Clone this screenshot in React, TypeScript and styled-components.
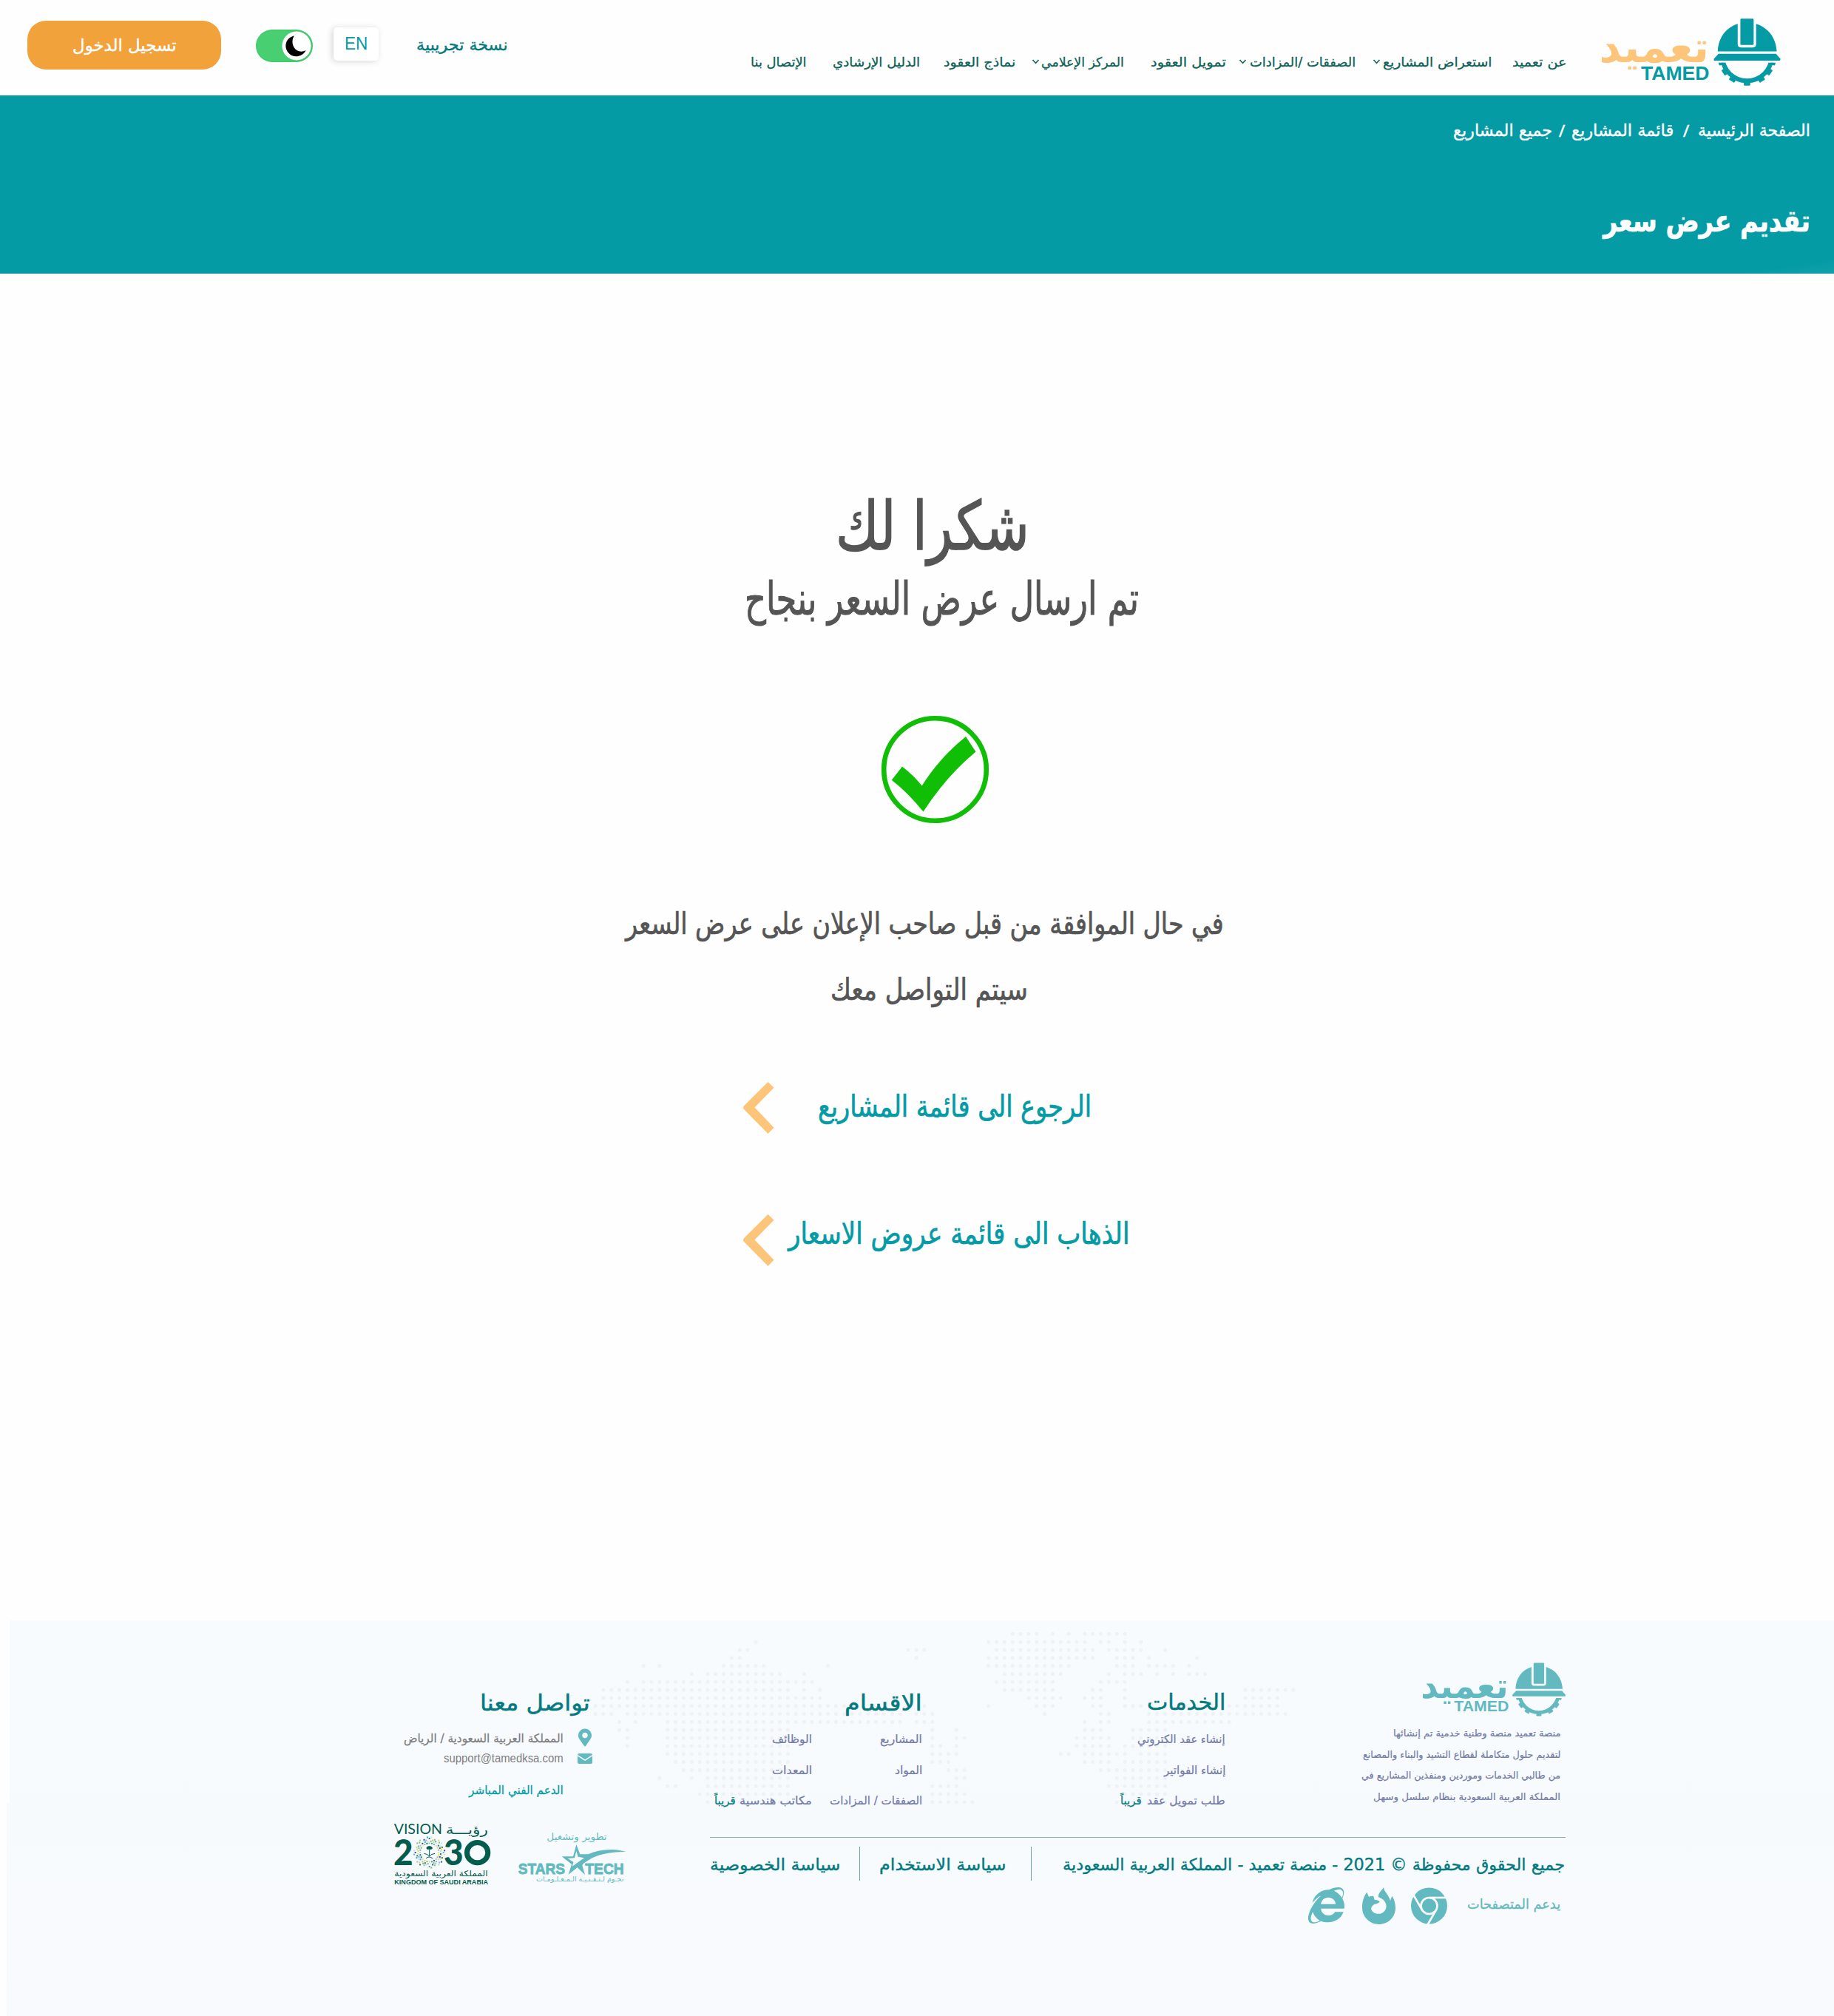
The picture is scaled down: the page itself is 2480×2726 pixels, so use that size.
import React, { useLayoutEffect, useRef, useState } from "react";
import styled, { createGlobalStyle } from "styled-components";
import { FaInternetExplorer, FaMapMarkerAlt } from "react-icons/fa";

const teal = "#049ba5";
const deep = "#047a80";
const soft = "#62bac0";
const arabic = '"DejaVu Sans Condensed", "DejaVu Sans", sans-serif';
const latin = '"Liberation Sans", Arial, sans-serif';

const GlobalStyle = createGlobalStyle`
  *, *::before, *::after { box-sizing: border-box; }
  body { margin: 0; background: #fefefe; font-family: ${arabic}; }
  h1, h2, h3, p, ul { margin: 0; padding: 0; font-weight: inherit; }
`;

/* ---------- fitted text ---------- */

type FitProps = {
  w: number;
  size: number;
  line: number;
  color?: string;
  bold?: boolean;
  western?: boolean;
  before?: number;
  above?: number;
  children: React.ReactNode;
};

const FitBox = styled.span<{
  $w: number;
  $size: number;
  $line: number;
  $color?: string;
  $bold?: boolean;
  $western?: boolean;
  $before: number;
  $above: number;
}>`
  display: block;
  flex: none;
  width: ${(p) => p.$w}px;
  height: ${(p) => p.$line}px;
  line-height: ${(p) => p.$line}px;
  font-size: ${(p) => p.$size}px;
  font-family: ${(p) => (p.$western ? latin : arabic)};
  font-weight: ${(p) => (p.$bold ? 700 : 400)};
  color: ${(p) => p.$color ?? "inherit"};
  margin-inline-start: ${(p) => p.$before}px;
  margin-top: ${(p) => p.$above}px;
  text-align: start;
  white-space: nowrap;
  -webkit-text-stroke: ${(p) => (p.$western ? "0" : "0.016em")} currentColor;
`;

const FitInner = styled.span`
  display: inline-block;
  transform-origin: right center;
`;

function Fit({ w, size, line, color, bold, western, before = 0, above = 0, children }: FitProps) {
  const ref = useRef<HTMLSpanElement>(null);
  const [scale, setScale] = useState(1);
  useLayoutEffect(() => {
    if (ref.current) setScale(w / ref.current.offsetWidth);
  }, [w, size]);
  return (
    <FitBox
      $w={w}
      $size={size}
      $line={line}
      $color={color}
      $bold={bold}
      $western={western}
      $before={before}
      $above={above}
    >
      <FitInner ref={ref} style={{ transform: `scaleX(${scale})` }}>
        {children}
      </FitInner>
    </FitBox>
  );
}

/* ---------- drawings ---------- */

const Drawing = styled.svg<{ $w: number; $h: number; $before?: number; $above?: number }>`
  display: block;
  flex: none;
  width: ${(p) => p.$w}px;
  height: ${(p) => p.$h}px;
  margin-right: ${(p) => p.$before ?? 0}px;
  margin-top: ${(p) => p.$above ?? 0}px;
  overflow: visible;
  direction: ltr;
`;

function TamedLogo({ w, h, word, mark, bg }: { w: number; h: number; word: string; mark: string; bg: string }) {
  const teeth = [12, 35, 58, 90, 122, 145, 168];
  return (
    <Drawing $w={w} $h={h} viewBox="39 44 735 274">
      <path
        fill={mark}
        d="M519 178C521 122 552 82 600 66V148Q600 162 614 162H661Q675 162 675 148V66C724 82 756 122 759 178Z"
      />
      <rect x="611" y="45" width="54" height="107" rx="4" fill={mark} />
      <path fill={mark} d="M522 188H756L773 207Q776 216 768 216H509Q500 216 504 207Z" />
      <clipPath id={`gear-${w}`}>
        <rect x="500" y="224" width="280" height="100" />
      </clipPath>
      <g clipPath={`url(#gear-${w})`}>
        <circle cx="638" cy="198" r="99" fill="none" stroke={mark} strokeWidth="20" />
        {teeth.map((a) => (
          <rect
            key={a}
            x="735"
            y="185"
            width="22"
            height="26"
            rx="3"
            fill={mark}
            transform={`rotate(${a} 638 198)`}
          />
        ))}
        <circle cx="638" cy="198" r="91" fill={bg} />
      </g>
      <text
        x="36"
        y="223"
        textLength="447"
        lengthAdjust="spacingAndGlyphs"
        fontFamily={arabic}
        fontWeight="700"
        fontSize="176"
        fill={word}
      >
        تعميد
      </text>
      <text
        x="206"
        y="294"
        textLength="279"
        lengthAdjust="spacingAndGlyphs"
        fontFamily={latin}
        fontWeight="700"
        fontSize="78"
        fill={mark}
      >
        TAMED
      </text>
    </Drawing>
  );
}

const NavChevron = ({ before }: { before: number }) => (
  <Drawing $w={9} $h={7} $before={before} $above={11} viewBox="0 0 9 7">
    <path d="M0.5 1L4.5 5.4L8.5 1" fill="none" stroke="#0f6b5c" strokeWidth="1.6" />
  </Drawing>
);

const Toggle = () => (
  <Drawing $w={77} $h={44} $before={28} $above={40} viewBox="0 0 77 44">
    <rect width="77" height="44" rx="22" fill="#3fc968" />
    <rect x="1" y="1.5" width="60" height="41" rx="20.5" fill="#47cf72" />
    <circle cx="55" cy="22" r="19.6" fill="#fff" />
    <path
      fill="#000"
      d="M52 8.3C44 10 39.5 17 40.5 24C42 33 50 37.3 57 36C62 35 66 32 67.5 28C62 31 55 30 51.5 24C48.5 18.5 49 12.5 52 8.3Z"
    />
  </Drawing>
);

const CheckMark = () => (
  <Drawing $w={145} $h={145} $before={1143} $above={119} viewBox="1192 968 145 145">
    <circle cx="1264.5" cy="1040.5" r="69.3" fill="none" stroke="#10be06" strokeWidth="6.6" />
    <path
      fill="#10be06"
      d="M1306 996L1319.5 1016.5Q1280 1049 1248.5 1097.5Q1228 1072 1205.8 1054.7L1220 1036.5Q1235 1048 1246.7 1062.5Q1270 1025 1306 996Z"
    />
  </Drawing>
);

const BackArrow = ({ before }: { before: number }) => (
  <Drawing $w={41.5} $h={70} $before={before} viewBox="0 0 41.5 70">
    <path
      fill="#fdc57a"
      d="M33.5 0L41.5 7.8L15.5 34.6L41.5 61.8L33.5 70L1 37Q-1 34.6 1 32.3Z"
    />
  </Drawing>
);

type Span = [number, number];
const mapRows: Span[][] = [
  [[52, 55], [57, 57], [59, 59], [61, 66]],
  [[20, 20], [49, 61], [63, 64], [66, 66], [68, 68]],
  [[18, 19], [39, 41], [50, 62], [64, 68], [71, 71]],
  [[17, 18], [40, 40], [49, 62], [65, 67], [69, 69], [75, 75]],
  [[6, 6], [8, 8], [16, 21], [29, 29], [49, 59], [65, 67], [69, 72], [74, 74]],
  [[12, 12], [14, 23], [26, 26], [51, 58], [64, 64], [66, 68], [70, 70], [72, 72], [74, 76]],
  [[4, 4], [6, 27], [50, 57], [63, 66]],
  [[1, 24], [26, 26], [28, 28], [51, 57], [62, 63], [66, 66], [81, 87]],
  [[1, 28], [54, 58], [61, 63], [66, 66], [81, 85]],
  [[0, 31], [41, 41], [49, 49], [55, 57], [62, 63], [66, 68], [79, 85]],
  [[0, 2], [4, 38], [40, 42], [56, 56], [63, 64], [69, 86]],
  [[3, 3], [5, 5], [9, 38], [40, 42], [61, 61], [63, 64], [69, 79]],
  [[3, 4], [9, 24], [42, 42], [45, 45], [61, 63], [67, 71]],
  [[4, 4], [9, 24], [42, 42], [45, 46], [60, 64], [67, 71]],
  [[4, 4], [9, 24], [42, 43], [45, 45], [60, 64], [66, 71]],
  [[9, 24], [42, 45], [58, 59], [61, 66], [68, 71]],
  [[10, 24], [42, 44], [61, 64], [66, 71]],
  [[11, 24], [44, 46], [63, 71]],
  [[8, 8], [12, 12], [14, 24], [45, 46], [65, 71]],
  [[9, 10], [14, 24], [42, 45], [64, 71]],
  [[13, 24], [42, 46], [66, 71]],
  [[14, 24], [42, 47], [65, 71]],
];

const MapLayer = styled.svg`
  position: absolute;
  left: 789px;
  top: 12px;
  width: 960px;
  height: 242px;
  direction: ltr;
`;

const DottedMap = () => (
  <MapLayer viewBox="798 2203 960 242">
    {mapRows.map((row, r) =>
      row.map(([from, to]) =>
        Array.from({ length: to - from + 1 }, (_, i) => (
          <circle
            key={`${r}-${from + i}`}
            cx={805 + (from + i) * 10.85}
            cy={2209.3 + r * 10.83}
            r="2.5"
            fill="#eef1f5"
          />
        ))
      )
    )}
  </MapLayer>
);

const Envelope = () => (
  <Drawing $w={20} $h={14} $before={47} $above={5} viewBox="0 0 20 14">
    <rect width="20" height="14" rx="2" fill={soft} />
    <path d="M0 2.6L10 9.2L20 2.6" fill="none" stroke="#f8fbfe" strokeWidth="1.5" />
  </Drawing>
);

const emblemColors = ["#7ab929", "#1d9ad6", "#0b6e4f", "#d8df25", "#57b7a5", "#1f3f8f", "#9aa5ad"];

const VisionLogo = () => (
  <Drawing $w={133.3} $h={89.3} $before={34.7} $above={27} viewBox="96 636 400 268">
    <g fill="#045c4d" fontFamily={latin}>
      <text x="98" y="694" fontSize="58" textLength="196" lengthAdjust="spacingAndGlyphs" fontFamily="Lato">
        VISION
      </text>
      <text x="308" y="692" fontSize="52" textLength="172" lengthAdjust="spacingAndGlyphs" fontFamily={arabic}>
        رؤيـــة
      </text>
      <text x="96" y="820" fontSize="143" fontWeight="900" textLength="80" lengthAdjust="spacingAndGlyphs" fontFamily="Lato">
        2
      </text>
      <text x="300" y="820" fontSize="143" fontWeight="900" textLength="80" lengthAdjust="spacingAndGlyphs" fontFamily="Lato">
        3
      </text>
      <ellipse cx="437" cy="768.5" rx="42.5" ry="41" fill="none" stroke="#045c4d" strokeWidth="21" />
      <text x="100" y="865" fontSize="32" textLength="379" lengthAdjust="spacingAndGlyphs" fontFamily={arabic}>
        المملكة العربية السعودية
      </text>
      <text x="100" y="898" fontSize="25" fontWeight="700" textLength="380" lengthAdjust="spacingAndGlyphs">
        KINGDOM OF SAUDI ARABIA
      </text>
    </g>
    {[38, 46, 53, 60].map((radius, ring) =>
      Array.from({ length: 24 }, (_, i) => {
        const a = ((i + (ring % 2) / 2) * Math.PI) / 12;
        const wave = ring > 1 ? Math.cos(a * 8) * 4 : 0;
        return (
          <rect
            key={`${ring}-${i}`}
            x={242 + Math.cos(a) * (radius + wave) - 3}
            y={768 + Math.sin(a) * (radius + wave) - 3}
            width={6}
            height={6}
            fill={emblemColors[(i * 3 + ring * 2) % emblemColors.length]}
            opacity={(i + ring) % 3 === 0 ? 0.35 : 0.9}
          />
        );
      })
    )}
    <g fill="none" stroke="#045c4d" strokeWidth="3">
      <path d="M242 752V784M220 772Q234 774 242 782Q250 774 264 772M228 792Q238 780 256 792" />
      <path fill="#045c4d" d="M231 752Q230 743 242 743Q254 743 253 752Q248 757 242 752Q236 757 231 752Z" />
    </g>
  </Drawing>
);

const StarsTech = () => (
  <Drawing $w={148} $h={72} $above={41} viewBox="600 678 444 216">
    <g fill={soft}>
      <text x="718" y="718" fontSize="38" textLength="244" lengthAdjust="spacingAndGlyphs" fontFamily={arabic}>
        تطوير وتشغيل
      </text>
      <g stroke={soft} strokeWidth="2.5" fontFamily={latin} fontWeight="700" fontSize="61">
        <text x="602" y="856" textLength="190" lengthAdjust="spacingAndGlyphs">
          STARS
        </text>
        <text x="874" y="856" textLength="157" lengthAdjust="spacingAndGlyphs">
          TECH
        </text>
      </g>
      <path
        d="M838 735L853 775H886Q930 755 985 756Q1015 757 1040 765Q940 764 885 800Q845 824 806 857L819 815L779 784H825ZM838 762L831 790L803 792L826 806L822 824Q848 805 870 790L845 785Z"
        fillRule="evenodd"
      />
      <path d="M880 790Q950 752 1010 758Q930 762 880 796L838 824L873 858L862 820Z" />
      <text x="675" y="885" fontSize="28" textLength="355" lengthAdjust="spacingAndGlyphs" fontFamily={arabic}>
        نجـوم لـتـقـنـيـة الـمـعـلـومـات
      </text>
    </g>
  </Drawing>
);

const ChromeIcon = () => (
  <Drawing $w={49} $h={50} $before={27} viewBox="504 996 147 150">
    <circle cx="577.5" cy="1071" r="73.5" fill={soft} />
    <g stroke="#f8fbfe" strokeWidth="8" fill="none">
      <circle cx="577.5" cy="1071" r="33" />
      {[0, 120, 240].map((a) => (
        <path key={a} d="M577 1038H652" transform={`rotate(${a} 577.5 1071)`} />
      ))}
    </g>
  </Drawing>
);

const FirefoxIcon = () => (
  <Drawing $w={45} $h={50} $before={21} viewBox="306 996 135 150">
    <path
      fill={soft}
      d="M325 1016L333 1035C340 1031 347 1030 352 1032L356 1047C363 1046 370 1048 377 1053C374 1062 362 1063 355 1065C346 1071 341 1077 343 1086C347 1100 370 1109 387 1100C403 1091 408 1072 400 1058C395 1047 384 1040 372 1036C370 1018 385 1010 393 996C395 1013 407 1020 413 1034C417 1040 418 1045 420 1050L427 1031C437 1046 441 1061 441 1080C441 1118 410 1146 374 1146C336 1146 306 1116 306 1078C306 1053 312 1034 325 1016Z"
    />
  </Drawing>
);

const ExplorerIcon = styled(FaInternetExplorer)`
  flex: none;
  width: 49px;
  height: 49px;
  margin-right: 24px;
  color: ${soft};
`;

const PinIcon = styled(FaMapMarkerAlt)`
  flex: none;
  width: 18px;
  height: 25px;
  margin-right: 48px;
  color: ${soft};
`;

/* ---------- layout ---------- */

const Page = styled.div`
  width: 2480px;
  height: 2726px;
  overflow: hidden;
  direction: rtl;
  background: #fefefe;
`;

const Header = styled.header`
  display: flex;
  align-items: flex-start;
  height: 129px;
  padding-right: 72px;
`;

const LogoSlot = styled.div`
  flex: none;
  padding-top: 25px;
`;

const Nav = styled.nav`
  display: flex;
  flex: none;
  padding-top: 69px;
  color: #0d6156;
`;

const LanguageBox = styled.button`
  display: flex;
  justify-content: center;
  flex: none;
  width: 61px;
  height: 45px;
  margin: 37px 51px 0 0;
  padding: 0;
  border: 0;
  border-radius: 5px;
  background: #fff;
  box-shadow: -2px 1px 8px rgba(0, 0, 0, 0.16);
`;

const LoginButton = styled.button`
  display: flex;
  align-items: center;
  justify-content: center;
  flex: none;
  width: 262px;
  height: 66px;
  margin: 28px 47px 0 0;
  padding: 0;
  border: 0;
  border-radius: 25px;
  background: #f1a23b;
`;

const Banner = styled.section`
  height: 241px;
  padding: 27px 32px 0 0;
  color: #fff;
  background: linear-gradient(172deg, transparent 88%, rgba(255, 255, 255, 0.06)) right bottom / 400px 100px no-repeat,
    ${teal};
`;

const Crumbs = styled.div`
  display: flex;
`;

const Main = styled.main`
  height: 1821px;
  padding-top: 287px;
  color: #555;
`;

const LinkRow = styled.div<{ $above: number }>`
  display: flex;
  height: 70px;
  margin-top: ${(p) => p.$above}px;
  color: ${teal};
`;

const Footer = styled.footer`
  position: relative;
  display: flex;
  width: 2471px;
  height: 535px;
  padding-right: 363px;
  background: linear-gradient(#fefefe, #fefefe) left top / 4px 247px no-repeat,
    linear-gradient(#f7fbfe, #f8fafd);
`;

const FooterMain = styled.div`
  position: relative;
  flex: none;
  width: 1157px;
`;

const FooterColumns = styled.div`
  display: flex;
  height: 294px;
  border-bottom: 1.5px solid #8fafae;
`;

const About = styled.div`
  flex: none;
  width: 276px;
  padding-top: 57px;
  color: #747ca8;
`;

const AboutText = styled.div`
  padding: 9px 7px 0 0;
`;

const Column = styled.div<{ $before: number; $top: number; $w: number }>`
  flex: none;
  width: ${(p) => p.$w}px;
  margin-inline-start: ${(p) => p.$before}px;
  padding-top: ${(p) => p.$top}px;
  color: #747ca8;
`;

const Row = styled.div<{ $above?: number }>`
  display: flex;
  margin-top: ${(p) => p.$above ?? 0}px;
`;

const Legal = styled.div`
  display: flex;
  height: 54px;
  padding: 12px 1px 0 0;
  color: ${deep};
`;

const Divider = styled.i<{ $before: number }>`
  flex: none;
  width: 1.5px;
  height: 46px;
  margin-inline-start: ${(p) => p.$before}px;
  background: #6ba5a8;
`;

const Browsers = styled.div`
  display: flex;
  margin-top: 13px;
  color: ${soft};
`;

const Contact = styled.div`
  position: relative;
  flex: none;
  width: 315px;
  margin-inline-start: 112px;
  padding-top: 90px;
  color: #7e7e80;
`;

/* ---------- content ---------- */

type NavItem = { label: string; w: number; before: number; arrow?: number };

const navItems: NavItem[] = [
  { label: "عن تعميد", w: 73, before: 45 },
  { label: "استعراض المشاريع", w: 148, before: 28, arrow: 3 },
  { label: "الصفقات /المزادات", w: 143, before: 24, arrow: 5 },
  { label: "تمويل العقود", w: 102, before: 18 },
  { label: "المركز الإعلامي", w: 112, before: 36, arrow: 3 },
  { label: "نماذج العقود", w: 97, before: 23 },
  { label: "الدليل الإرشادي", w: 118, before: 32 },
  { label: "الإتصال بنا", w: 76, before: 35 },
];

const aboutLines = [
  { text: "منصة تعميد منصة وطنية خدمية تم إنشائها", w: 227 },
  { text: "لتقديم حلول متكاملة لقطاع التشيد والبناء والمصانع", w: 267 },
  { text: "من طالبي الخدمات وموردين ومنفذين المشاريع في", w: 269 },
  { text: "المملكة العربية السعودية بنظام سلسل وسهل", w: 253 },
];

const FooterLink = ({ w, children, before }: { w: number; children: string; before?: number }) => (
  <Fit w={w} size={15.5} line={41.5} before={before}>
    {children}
  </Fit>
);

const Soon = ({ before }: { before: number }) => (
  <Fit w={29} size={15.5} line={41.5} color={deep} before={before}>
    قريباً
  </Fit>
);

export default function App() {
  return (
    <Page>
      <GlobalStyle />
      <Header>
        <LogoSlot>
          <TamedLogo w={245} h={91} word="#fdc57a" mark={teal} bg="#fefefe" />
        </LogoSlot>
        <Nav>
          {navItems.map((item) => (
            <React.Fragment key={item.label}>
              <Fit w={item.w} size={17.5} line={30} before={item.before}>
                {item.label}
              </Fit>
              {item.arrow && <NavChevron before={item.arrow} />}
            </React.Fragment>
          ))}
        </Nav>
        <Fit w={124} size={21.5} line={31} color={deep} before={328} above={45}>
          نسخة تجريبية
        </Fit>
        <LanguageBox>
          <Fit w={31} size={24} line={43} color={teal} western>
            EN
          </Fit>
        </LanguageBox>
        <Toggle />
        <LoginButton>
          <Fit w={141} size={22.5} line={65} color="#fff">
            تسجيل الدخول
          </Fit>
        </LoginButton>
      </Header>

      <Banner>
        <Crumbs>
          <Fit w={152} size={23} line={40}>الصفحة الرئيسية</Fit>
          <Fit w={8} size={20} line={40} before={12}>/</Fit>
          <Fit w={138} size={23} line={40} before={13}>قائمة المشاريع</Fit>
          <Fit w={8} size={20} line={40} before={9}>/</Fit>
          <Fit w={134} size={23} line={40} before={9}>جميع المشاريع</Fit>
        </Crumbs>
        <Fit w={280} size={41} line={60} above={73} bold>
          تقديم عرض سعر
        </Fit>
      </Banner>

      <Main>
        <Fit w={262} size={91} line={110} before={1088}>شكرا لك</Fit>
        <Fit w={533} size={62} line={82} before={940} above={2}>تم ارسال عرض السعر بنجاح</Fit>
        <Row $above={-2}>
          <CheckMark />
        </Row>
        <Fit w={809} size={41} line={60} before={825} above={106}>
          في حال الموافقة من قبل صاحب الإعلان على عرض السعر
        </Fit>
        <Fit w={267} size={41} line={60} before={1090} above={29}>سيتم التواصل معك</Fit>
        <LinkRow $above={95}>
          <Fit w={370} size={41} line={66} before={1004}>الرجوع الى قائمة المشاريع</Fit>
          <BackArrow before={60} />
        </LinkRow>
        <LinkRow $above={109}>
          <Fit w={461} size={41} line={53} before={952.5}>الذهاب الى قائمة عروض الاسعار</Fit>
          <BackArrow before={20.5} />
        </LinkRow>
      </Main>

      <Footer>
        <DottedMap />
        <FooterMain>
          <FooterColumns>
            <About>
              <TamedLogo w={195} h={73} word={soft} mark={soft} bg="#f8fbfe" />
              <AboutText>
                {aboutLines.map((l) => (
                  <Fit key={l.text} w={l.w} size={13} line={28.7}>
                    {l.text}
                  </Fit>
                ))}
              </AboutText>
            </About>
            <Column $before={184} $top={89} $w={143}>
              <Fit w={106} size={30} line={44} color={deep}>الخدمات</Fit>
              <Row $above={8}><FooterLink w={119}>إنشاء عقد الكتروني</FooterLink></Row>
              <Row><FooterLink w={83}>إنشاء الفواتير</FooterLink></Row>
              <Row>
                <FooterLink w={106}>طلب تمويل عقد</FooterLink>
                <Soon before={7} />
              </Row>
            </Column>
            <Column $before={267} $top={90} $w={281}>
              <Fit w={105} size={30} line={44} color={deep}>الاقسام</Fit>
              <Row $above={7}>
                <FooterLink w={57}>المشاريع</FooterLink>
                <FooterLink w={54} before={92}>الوظائف</FooterLink>
              </Row>
              <Row>
                <FooterLink w={37}>المواد</FooterLink>
                <FooterLink w={54} before={112}>المعدات</FooterLink>
              </Row>
              <Row>
                <FooterLink w={125}>الصفقات / المزادات</FooterLink>
                <FooterLink w={98} before={24}>مكاتب هندسية</FooterLink>
                <Soon before={5} />
              </Row>
            </Column>
          </FooterColumns>
          <Legal>
            <Fit w={679} size={22.5} line={49}>
              جميع الحقوق محفوظة © 2021 - منصة تعميد - المملكة العربية السعودية
            </Fit>
            <Divider $before={42} />
            <Fit w={172} size={22.5} line={49} before={33}>سياسة الاستخدام</Fit>
            <Divider $before={25.5} />
            <Fit w={177} size={22.5} line={49} before={24.5}>سياسة الخصوصية</Fit>
          </Legal>
          <Browsers>
            <Fit w={126} size={18} line={46} before={7}>يدعم المتصفحات</Fit>
            <ChromeIcon />
            <FirefoxIcon />
            <ExplorerIcon />
          </Browsers>
        </FooterMain>
        <Contact>
          <Fit w={149} size={30} line={44} color={deep} before={50.5}>تواصل معنا</Fit>
          <Row $above={12}>
            <PinIcon />
            <Fit w={216} size={16} line={27} before={20}>المملكة العربية السعودية / الرياض</Fit>
          </Row>
          <Row $above={2}>
            <Envelope />
            <Fit w={162} size={16} line={24} before={19} western>support@tamedksa.com</Fit>
          </Row>
          <Fit w={128} size={16} line={26} color={teal} before={86} above={18}>الدعم الفني المباشر</Fit>
          <Row>
            <StarsTech />
            <VisionLogo />
          </Row>
        </Contact>
      </Footer>
    </Page>
  );
}
